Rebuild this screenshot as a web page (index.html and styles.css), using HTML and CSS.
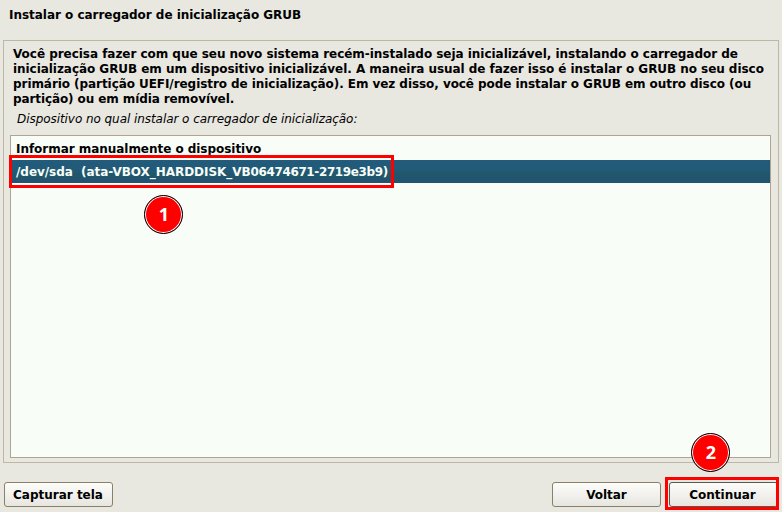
FILE: index.html
```html
<!DOCTYPE html>
<html lang="pt-BR">
<head>
<meta charset="utf-8">
<title>Instalar o carregador de inicialização GRUB</title>
<link rel="stylesheet" href="styles.css">
</head>
<body>
<main class="installer">
  <h1 class="title">Instalar o carregador de inicialização GRUB</h1>
  <section class="panel">
    <p class="description">
      <span class="line line-first">Você precisa fazer com que seu novo sistema recém-instalado seja inicializável, instalando o carregador de</span>
      <span class="line">inicialização GRUB em um dispositivo inicializável. A maneira usual de fazer isso é instalar o GRUB no seu disco</span>
      <span class="line line-third">primário (partição UEFI/registro de inicialização). Em vez disso, você pode instalar o GRUB em outro disco (ou</span>
      <span class="line line-last">partição) ou em mídia removível.</span>
    </p>
    <p class="question">Dispositivo no qual instalar o carregador de inicialização:</p>
    <ul class="list">
      <li class="row">Informar manualmente o dispositivo</li>
      <li class="row selected">/dev/sda&nbsp; (ata-VBOX_HARDDISK_VB<span class="serial">06474671-2719e3b9</span>)</li>
    </ul>
  </section>
  <footer class="actions">
    <button class="button capture">Capturar tela</button>
    <button class="button back">Voltar</button>
    <button class="button next">Continuar</button>
  </footer>
  <div class="outline outline-device"></div>
  <div class="outline outline-continue"></div>
  <div class="badge badge-one">1</div>
  <div class="badge badge-two">2</div>
</main>
</body>
</html>
```
FILE: styles.css
```css
* { box-sizing: border-box; }
body { margin: 0; background: #e8e7e0; }
.installer {
  position: relative;
  display: flex;
  flex-direction: column;
  width: 782px;
  height: 512px;
  overflow: hidden;
  font: bold 12px/15px "DejaVu Sans", sans-serif;
  color: #000;
}
.title { margin: 8px 0 17px 9px; font: inherit; letter-spacing: -0.03px; }
.panel {
  display: flex;
  flex-direction: column;
  height: 423px;
  margin: 0 3px;
  padding: 6px 7px 4px 6px;
  border: 1px solid #bfb7a6;
}
.description { margin: 0 0 5px 3px; white-space: nowrap; }
.line { display: block; letter-spacing: -0.05px; }
.line-first { letter-spacing: -0.035px; }
.line-third { letter-spacing: -0.065px; }
.line-last { letter-spacing: -0.1px; }
.question { margin: 0 0 8px 7px; font-weight: normal; font-style: italic; line-height: 15px; letter-spacing: -0.06px; }
.list {
  flex: 1;
  margin: 0;
  padding: 1px 0 0 1px;
  list-style: none;
  background: #f8fdf8;
  border: 1px solid #b0a491;
}
.row { height: 23px; padding-left: 4px; line-height: 24px; white-space: pre; letter-spacing: -0.04px; }
.selected { color: #f8fdf8; background: linear-gradient(#225b7b 0%, #225b78 40%, #21566a 65%, #235373 100%); }
.serial { letter-spacing: -0.38px; }
.actions { display: flex; gap: 8px; margin: 19px 4px 0; }
.button {
  width: 109px;
  height: 25px;
  padding: 0;
  border: 1px solid #8c7f68;
  border-radius: 3px;
  background: linear-gradient(#fcfcfa, #f1f0ec 55%, #e7e5df);
  font: inherit;
  line-height: 24px;
  letter-spacing: -0.04px;
  color: inherit;
}
.capture { padding-right: 1px; letter-spacing: 0; }
.back { margin-left: auto; }
.next { letter-spacing: 0; padding-right: 2px; border-color: #5d574c; }
.outline { position: absolute; border: 3px solid #f00; }
.outline-device { left: 9px; top: 155px; width: 385px; height: 33px; }
.outline-continue { left: 665px; top: 477px; width: 114px; height: 33px; }
.badge {
  position: absolute;
  width: 39px;
  height: 39px;
  border: 1px solid #000;
  border-radius: 50%;
  background: #f00;
  box-shadow: inset 0 0 0 1px #fff;
  color: #fff;
  font: bold 18px/36px "Open Sans", sans-serif;
  text-align: center;
}
.badge-one { left: 144.4px; top: 195.4px; }
.badge-two { left: 691.4px; top: 433.4px; }
```
